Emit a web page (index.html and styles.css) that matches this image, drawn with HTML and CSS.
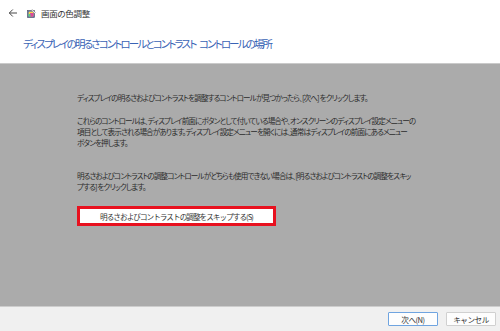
FILE: index.html
```html
<!DOCTYPE html>
<html lang="ja">
<head>
<meta charset="utf-8">
<link rel="stylesheet" href="styles.css">
</head>
<body>
<div class="window">
  <div class="titlebar">
    <svg class="back" width="10" height="10" viewBox="0 0 10 10"><path d="M9 5H1.5M4.8 1.5L1.3 5l3.5 3.5" fill="none" stroke="#333" stroke-width="0.9"/></svg>
    <svg class="appicon" width="9" height="9" viewBox="0 0 9 9">
      <rect x="0.5" y="1.5" width="7" height="7" fill="#2a55c9" stroke="#555" stroke-width="0.6"/>
      <rect x="1.5" y="2.5" width="5" height="5" fill="#ffd84a"/>
      <rect x="3" y="4" width="3.5" height="3.5" fill="#e0469a"/>
      <rect x="1.5" y="5" width="2" height="2.5" fill="#4fd08c"/>
      <path d="M5 0.5l3.5 3-1 1-3-3z" fill="#f5f5f5" stroke="#666" stroke-width="0.4"/>
    </svg>
    <span class="apptitle">画面の色調整</span>
  </div>
  <h1 class="heading">ディスプレイの明るさコントロールとコントラスト コントロールの場所</h1>
  <div class="content">
    <div class="textcol">
      <p class="para para-first">ディスプレイの明るさおよびコントラストを調整するコントロールが見つかったら、[次へ] をクリックします。</p>
      <p class="para para-mid">これらのコントロールは、ディスプレイ前面にボタンとして付いている場合や、オンスクリーンのディスプレイ設定メニューの<br>項目として表示される場合があります。ディスプレイ設定メニューを開くには、通常はディスプレイの前面にあるメニュー<br>ボタンを押します。</p>
      <p class="para para-last">明るさおよびコントラストの調整コントロールがどちらも使用できない場合は、[明るさおよびコントラストの調整をスキッ<br>プする] をクリックします。</p>
      <button class="skip">明るさおよびコントラストの調整をスキップする(S)</button>
    </div>
  </div>
  <div class="footer">
    <button class="btn btn-default">次へ(N)</button>
    <button class="btn">キャンセル</button>
  </div>
</div>
</body>
</html>
```
FILE: styles.css
```css
* { box-sizing: border-box; }
html, body { margin: 0; padding: 0; }
body {
  width: 500px;
  height: 331px;
  background: #ffffff;
  font-family: "Noto Sans CJK JP", "Noto Sans", sans-serif;
  font-feature-settings: "palt";
  color: #333;
  overflow: hidden;
}
.window {
  display: flex;
  flex-direction: column;
  height: 331px;
}
.titlebar {
  display: flex;
  align-items: center;
  height: 26px;
  padding-left: 4px;
}
.back { margin-left: 4px; margin-right: 9px; }
.appicon { margin-right: 5px; }
.apptitle {
  font-size: 8.5px;
  color: #333;
  letter-spacing: -0.3px;
}
.heading {
  margin: 0;
  height: 37px;
  padding: 11px 0 0 23px;
  font-size: 10.5px;
  font-weight: normal;
  color: #3a63b5;
  letter-spacing: -1.85px;
  word-spacing: 3px;
  line-height: 14px;
}
.content {
  flex: 1;
  background: #ababab;
  border-top: 1px solid #cacaca;
  padding: 28px 0 0 77px;
}
.textcol {
  width: 360px;
}
.para {
  margin: 0;
  font-size: 7.6px;
  line-height: 11px;
  color: #2b2b2b;
  letter-spacing: -0.9px;
  white-space: nowrap;
}
.para-first { margin-bottom: 12px; }
.para-mid { margin-bottom: 22px; }
.para-last { margin-bottom: 14px; }
.skip {
  display: block;
  width: 199px;
  height: 20px;
  background: #ffffff;
  border: 3px solid #e8111f;
  font-family: inherit;
  font-size: 7.6px;
  letter-spacing: -0.95px;
  color: #333;
  padding: 0;
}
.footer {
  height: 25px;
  background: #f0f0f0;
  border-top: 1px solid #cdcdcd;
  display: flex;
  justify-content: flex-end;
  align-items: center;
  gap: 8px;
  padding-right: 4px;
}
.btn {
  width: 50px;
  height: 14px;
  background: #fdfdfd;
  border: 1px solid #d0d0d0;
  border-radius: 1px;
  font-family: inherit;
  font-size: 7.6px;
  letter-spacing: -0.5px;
  color: #333;
  padding: 0;
}
.btn-default { border-color: #6fa4e0; }
```
